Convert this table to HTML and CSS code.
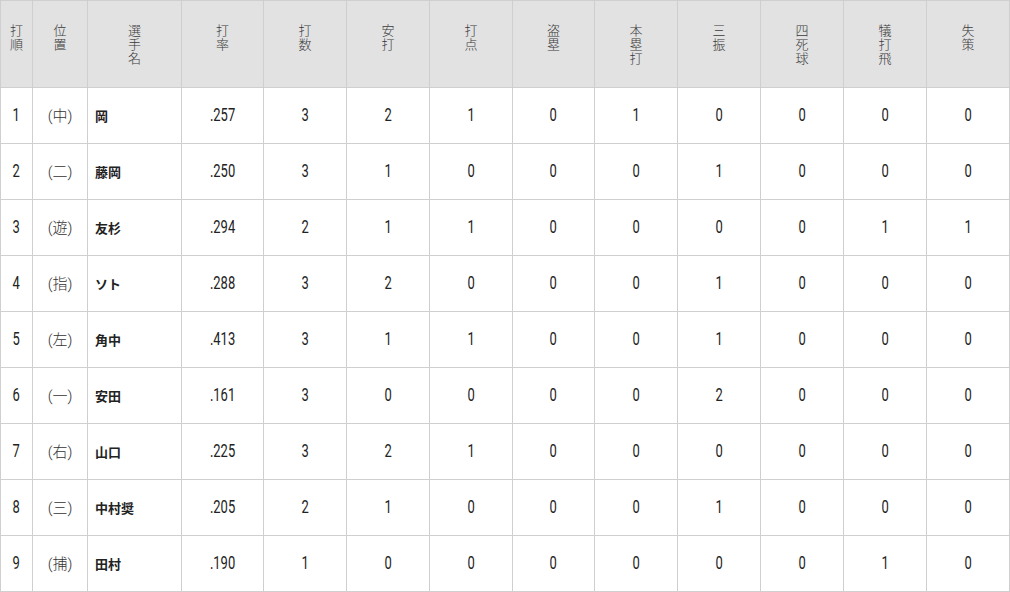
FILE: index.html
```html
<!DOCTYPE html>
<html lang="ja">
<head>
<meta charset="utf-8">
<link rel="stylesheet" href="styles.css">
</head>
<body>
<table class="score">
<colgroup>
<col class="c-order"><col class="c-pos"><col class="c-name"><col class="c-avg">
<col class="c-n"><col class="c-n"><col class="c-n"><col class="c-n2"><col class="c-n">
<col class="c-n"><col class="c-n"><col class="c-n"><col class="c-n">
</colgroup>
<thead>
<tr>
<th><span class="v">打</span><span class="v">順</span></th>
<th><span class="v">位</span><span class="v">置</span></th>
<th><span class="v">選</span><span class="v">手</span><span class="v">名</span></th>
<th><span class="v">打</span><span class="v">率</span></th>
<th><span class="v">打</span><span class="v">数</span></th>
<th><span class="v">安</span><span class="v">打</span></th>
<th><span class="v">打</span><span class="v">点</span></th>
<th><span class="v">盗</span><span class="v">塁</span></th>
<th><span class="v">本</span><span class="v">塁</span><span class="v">打</span></th>
<th><span class="v">三</span><span class="v">振</span></th>
<th><span class="v">四</span><span class="v">死</span><span class="v">球</span></th>
<th><span class="v">犠</span><span class="v">打</span><span class="v">飛</span></th>
<th><span class="v">失</span><span class="v">策</span></th>
</tr>
</thead>
<tbody>
<tr><td><span class="n">1</span></td><td class="pos">(中)</td><td class="name">岡</td><td><span class="n">.257</span></td><td><span class="n">3</span></td><td><span class="n">2</span></td><td><span class="n">1</span></td><td><span class="n">0</span></td><td><span class="n">1</span></td><td><span class="n">0</span></td><td><span class="n">0</span></td><td><span class="n">0</span></td><td><span class="n">0</span></td></tr>
<tr><td><span class="n">2</span></td><td class="pos">(二)</td><td class="name">藤岡</td><td><span class="n">.250</span></td><td><span class="n">3</span></td><td><span class="n">1</span></td><td><span class="n">0</span></td><td><span class="n">0</span></td><td><span class="n">0</span></td><td><span class="n">1</span></td><td><span class="n">0</span></td><td><span class="n">0</span></td><td><span class="n">0</span></td></tr>
<tr><td><span class="n">3</span></td><td class="pos">(遊)</td><td class="name">友杉</td><td><span class="n">.294</span></td><td><span class="n">2</span></td><td><span class="n">1</span></td><td><span class="n">1</span></td><td><span class="n">0</span></td><td><span class="n">0</span></td><td><span class="n">0</span></td><td><span class="n">0</span></td><td><span class="n">1</span></td><td><span class="n">1</span></td></tr>
<tr><td><span class="n">4</span></td><td class="pos">(指)</td><td class="name">ソト</td><td><span class="n">.288</span></td><td><span class="n">3</span></td><td><span class="n">2</span></td><td><span class="n">0</span></td><td><span class="n">0</span></td><td><span class="n">0</span></td><td><span class="n">1</span></td><td><span class="n">0</span></td><td><span class="n">0</span></td><td><span class="n">0</span></td></tr>
<tr><td><span class="n">5</span></td><td class="pos">(左)</td><td class="name">角中</td><td><span class="n">.413</span></td><td><span class="n">3</span></td><td><span class="n">1</span></td><td><span class="n">1</span></td><td><span class="n">0</span></td><td><span class="n">0</span></td><td><span class="n">1</span></td><td><span class="n">0</span></td><td><span class="n">0</span></td><td><span class="n">0</span></td></tr>
<tr><td><span class="n">6</span></td><td class="pos">(一)</td><td class="name">安田</td><td><span class="n">.161</span></td><td><span class="n">3</span></td><td><span class="n">0</span></td><td><span class="n">0</span></td><td><span class="n">0</span></td><td><span class="n">0</span></td><td><span class="n">2</span></td><td><span class="n">0</span></td><td><span class="n">0</span></td><td><span class="n">0</span></td></tr>
<tr><td><span class="n">7</span></td><td class="pos">(右)</td><td class="name">山口</td><td><span class="n">.225</span></td><td><span class="n">3</span></td><td><span class="n">2</span></td><td><span class="n">1</span></td><td><span class="n">0</span></td><td><span class="n">0</span></td><td><span class="n">0</span></td><td><span class="n">0</span></td><td><span class="n">0</span></td><td><span class="n">0</span></td></tr>
<tr><td><span class="n">8</span></td><td class="pos">(三)</td><td class="name">中村奨</td><td><span class="n">.205</span></td><td><span class="n">2</span></td><td><span class="n">1</span></td><td><span class="n">0</span></td><td><span class="n">0</span></td><td><span class="n">0</span></td><td><span class="n">1</span></td><td><span class="n">0</span></td><td><span class="n">0</span></td><td><span class="n">0</span></td></tr>
<tr><td><span class="n">9</span></td><td class="pos">(捕)</td><td class="name">田村</td><td><span class="n">.190</span></td><td><span class="n">1</span></td><td><span class="n">0</span></td><td><span class="n">0</span></td><td><span class="n">0</span></td><td><span class="n">0</span></td><td><span class="n">0</span></td><td><span class="n">0</span></td><td><span class="n">1</span></td><td><span class="n">0</span></td></tr>
</tbody>
</table>
</body>
</html>
```
FILE: styles.css
```css
html, body {
  margin: 0;
  padding: 0;
  background: #fff;
}
.score {
  border-collapse: collapse;
  table-layout: fixed;
  width: 1010px;
  color: #222;
  font-family: "Roboto", "Noto Sans CJK JP", sans-serif;
}
.c-order { width: 32px; }
.c-pos { width: 55px; }
.c-name { width: 94px; }
.c-avg { width: 82px; }
.c-n { width: 83px; }
.c-n2 { width: 82px; }
.score th, .score td {
  border: 1px solid #cfcfcf;
  padding: 0;
  text-align: center;
}
.score th {
  background: #e2e2e2;
  height: 87px;
  vertical-align: top;
  padding-top: 22px;
  box-sizing: border-box;
  font-family: "Noto Sans CJK JP", sans-serif;
  font-weight: 300;
  font-size: 13px;
  line-height: 14px;
  color: #3a3a3a;
}
.score th .v {
  display: block;
  height: 14px;
  overflow: visible;
}
.score td {
  height: 55px;
  vertical-align: middle;
  line-height: 20px;
}
.score td .n {
  display: inline-block;
  font-family: "Roboto", sans-serif;
  font-size: 18px;
  font-weight: 400;
  color: #222;
  transform: scaleX(0.72);
}
.score td.pos {
  font-family: "Roboto", "Noto Sans CJK JP", sans-serif;
  font-weight: 300;
  font-size: 15px;
  color: #333;
}
.score td.name {
  text-align: left;
  padding-left: 7px;
  font-family: "Noto Sans CJK JP", sans-serif;
  font-weight: 700;
  font-size: 13px;
}
```
